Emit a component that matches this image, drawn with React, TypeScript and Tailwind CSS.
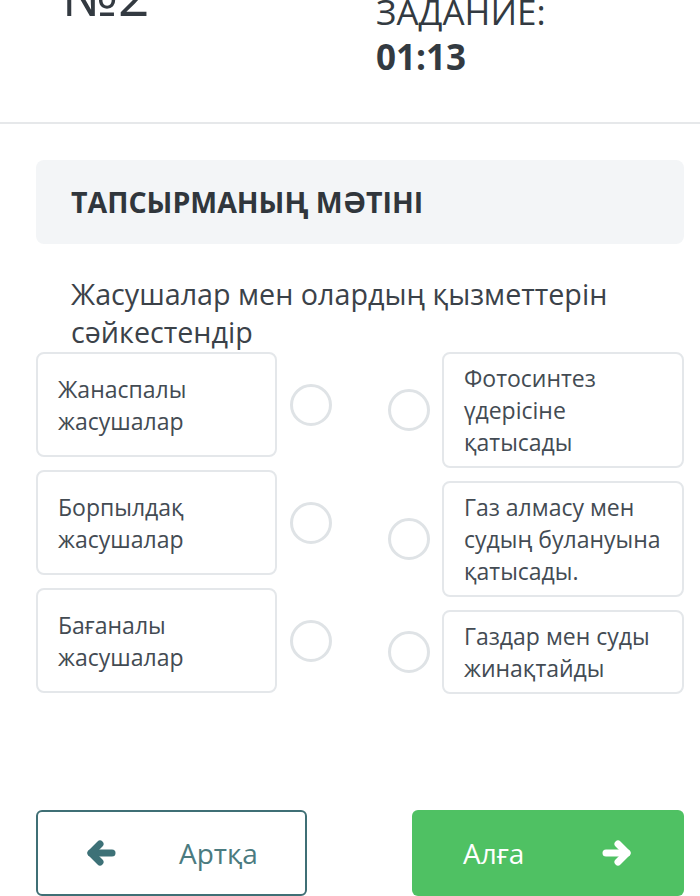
const leftItems = [
  ['Жанаспалы', 'жасушалар'],
  ['Борпылдақ', 'жасушалар'],
  ['Бағаналы', 'жасушалар'],
]

const rightItems = [
  ['Фотосинтез', 'үдерісіне', 'қатысады'],
  ['Газ алмасу мен', 'судың булануына', 'қатысады.'],
  ['Газдар мен суды', 'жинақтайды'],
]

const Circle = () => (
  <div className="h-[42px] w-[42px] shrink-0 rounded-full border-[3px] border-[#dfe3e6]" />
)

// thick rounded arrow, pointing left unless flipped
const Arrow = ({ flip, color }: { flip?: boolean; color: string }) => (
  <svg
    width="30"
    height="26"
    viewBox="0 0 30 26"
    className={flip ? 'scale-x-[-1]' : ''}
    fill="none"
    stroke={color}
    strokeWidth="7"
    strokeLinecap="round"
    strokeLinejoin="round"
  >
    <path d="M5 13H26" />
    <path d="M14 4L5 13L14 22" />
  </svg>
)

const App = () => {
  return (
    <div
      className="h-[896px] w-[700px] overflow-hidden bg-white text-[#3b4249]"
      style={{ fontFamily: '"Open Sans", "Noto Sans", sans-serif' }}
    >
      <header className="flex h-[122px] overflow-hidden">
        <div className="w-[376px] shrink-0 pl-[62px]">
          <div className="-mt-[33px] text-[55px] leading-[55px] text-[#333a41]">№2</div>
        </div>
        <div className="-mt-[11px] text-[35px] leading-[45px] text-[#333a41]">
          <div>ЗАДАНИЕ:</div>
          <div className="font-bold">01:13</div>
        </div>
      </header>
      <div className="h-[2px] bg-[#e6e8ea]" />

      <main className="pl-[36px] pr-[16px] pt-[36px]">
        <div className="flex h-[84px] items-center rounded-lg bg-[#f3f5f7] pl-[35px]">
          <h1 className="text-[28.5px] font-bold text-[#30363c]">ТАПСЫРМАНЫҢ МӘТІНІ</h1>
        </div>

        <p className="mt-[31px] pl-[35px] text-[28.7px] leading-[38px] text-[#3b4249]">
          Жасушалар мен олардың қызметтерін сәйкестендір
        </p>

        <div className="mt-[1px] flex justify-between">
          <div className="flex flex-col gap-[13px]">
            {leftItems.map((lines, i) => (
              <div key={i} className="flex items-center gap-[13px]">
                <div className="flex h-[105px] w-[241px] items-center rounded-lg border-2 border-[#e4e7ea] px-[20px] text-[23px] leading-[32px] text-[#434b53]">
                  <div>
                    {lines.map((l) => (
                      <div key={l}>{l}</div>
                    ))}
                  </div>
                </div>
                <Circle />
              </div>
            ))}
          </div>

          <div className="flex flex-col gap-[13px]">
            {rightItems.map((lines, i) => (
              <div key={i} className="flex items-center gap-[12px]">
                <Circle />
                <div className="w-[242px] rounded-lg border-2 border-[#e4e7ea] px-[20px] py-[8px] text-[23px] leading-[32px] text-[#434b53]">
                  {lines.map((l) => (
                    <div key={l}>{l}</div>
                  ))}
                </div>
              </div>
            ))}
          </div>
        </div>

        <div className="mt-[116px] flex justify-between">
          <button className="flex h-[86px] w-[271px] items-center rounded-md border-2 border-[#3f6f75] pl-[48px] text-[28px] text-[#4b7b80]">
            <Arrow color="#3d7177" />
            <span className="ml-[63px]">Артқа</span>
          </button>
          <button className="flex h-[86px] w-[272px] items-center justify-between rounded-md bg-[#4fc163] pl-[51px] pr-[52px] text-[28px] text-white">
            <span>Алға</span>
            <Arrow flip color="#ffffff" />
          </button>
        </div>
      </main>
    </div>
  )
}

export default App
